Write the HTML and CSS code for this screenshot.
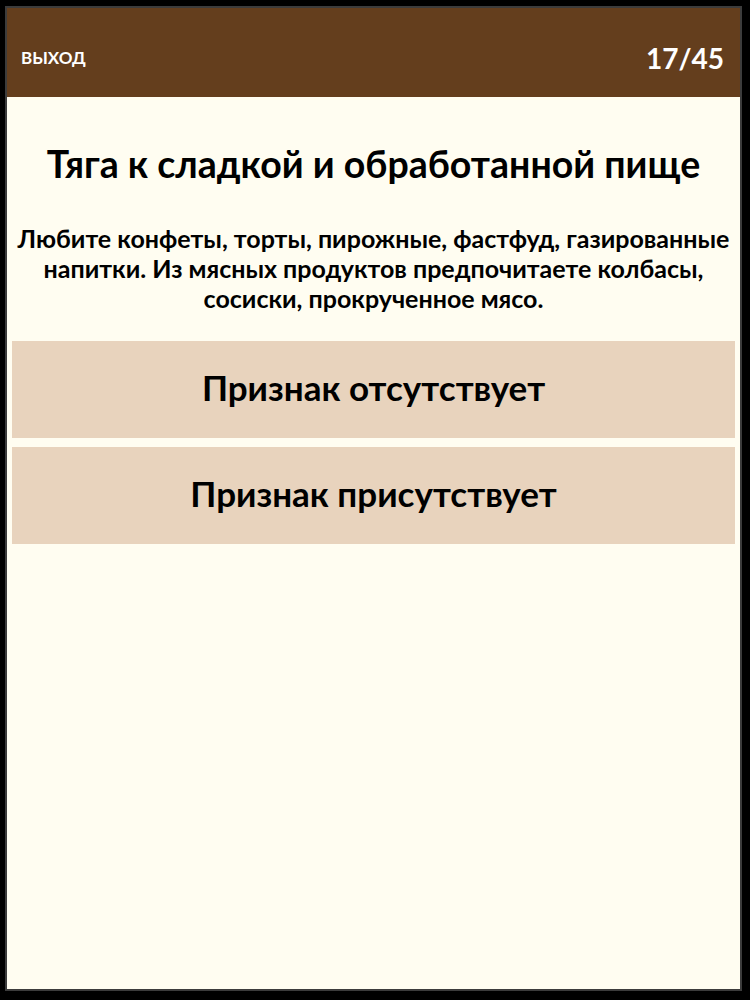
FILE: index.html
```html
<!DOCTYPE html>
<html lang="ru">
<head>
<meta charset="utf-8">
<link rel="stylesheet" href="styles.css">
</head>
<body>
<div class="frame">
  <header class="topbar">
    <span class="exit">ВЫХОД</span>
    <span class="counter">17/45</span>
  </header>
  <main class="content">
    <h1 class="title">Тяга к сладкой и обработанной пище</h1>
    <p class="desc">Любите конфеты, торты, пирожные, фастфуд, газированные напитки. Из мясных продуктов предпочитаете колбасы, сосиски, прокрученное мясо.</p>
    <div class="options">
      <div class="option">Признак отсутствует</div>
      <div class="option">Признак присутствует</div>
    </div>
  </main>
</div>
</body>
</html>
```
FILE: styles.css
```css
html, body {
  margin: 0;
  padding: 0;
  background: #000;
}
body {
  width: 750px;
  height: 1000px;
  overflow: hidden;
  font-family: Lato, "Open Sans", sans-serif;
}
.frame {
  margin: 6px 0 0 5px;
  width: 733px;
  height: 981px;
  border: 2px solid #3c3c3c;
  background: #fffdf1;
  display: flex;
  flex-direction: column;
}
.topbar {
  height: 89px;
  flex: none;
  box-sizing: border-box;
  background: #643e1d;
  color: #fff;
  display: flex;
  align-items: center;
  justify-content: space-between;
  padding: 10px 16px 0 14px;
}
.exit {
  font-size: 17px;
  font-weight: 700;
}
.counter {
  font-size: 28px;
  font-weight: 700;
}
.content {
  display: flex;
  flex-direction: column;
  align-items: center;
  padding: 0 5px;
}
.title {
  margin: 47px 0 0;
  font-size: 37.5px;
  font-weight: 700;
  color: #000;
  text-align: center;
  line-height: 40px;
}
.desc {
  margin: 39px 0 0;
  font-size: 25px;
  font-weight: 700;
  color: #000;
  text-align: center;
  line-height: 30px;
}
.options {
  align-self: stretch;
  display: flex;
  flex-direction: column;
  gap: 9px;
  margin-top: 28px;
}
.option {
  height: 97px;
  box-sizing: border-box;
  padding-bottom: 6px;
  background: #e8d3bd;
  display: flex;
  align-items: center;
  justify-content: center;
  font-size: 35px;
  font-weight: 700;
  color: #000;
}
```
